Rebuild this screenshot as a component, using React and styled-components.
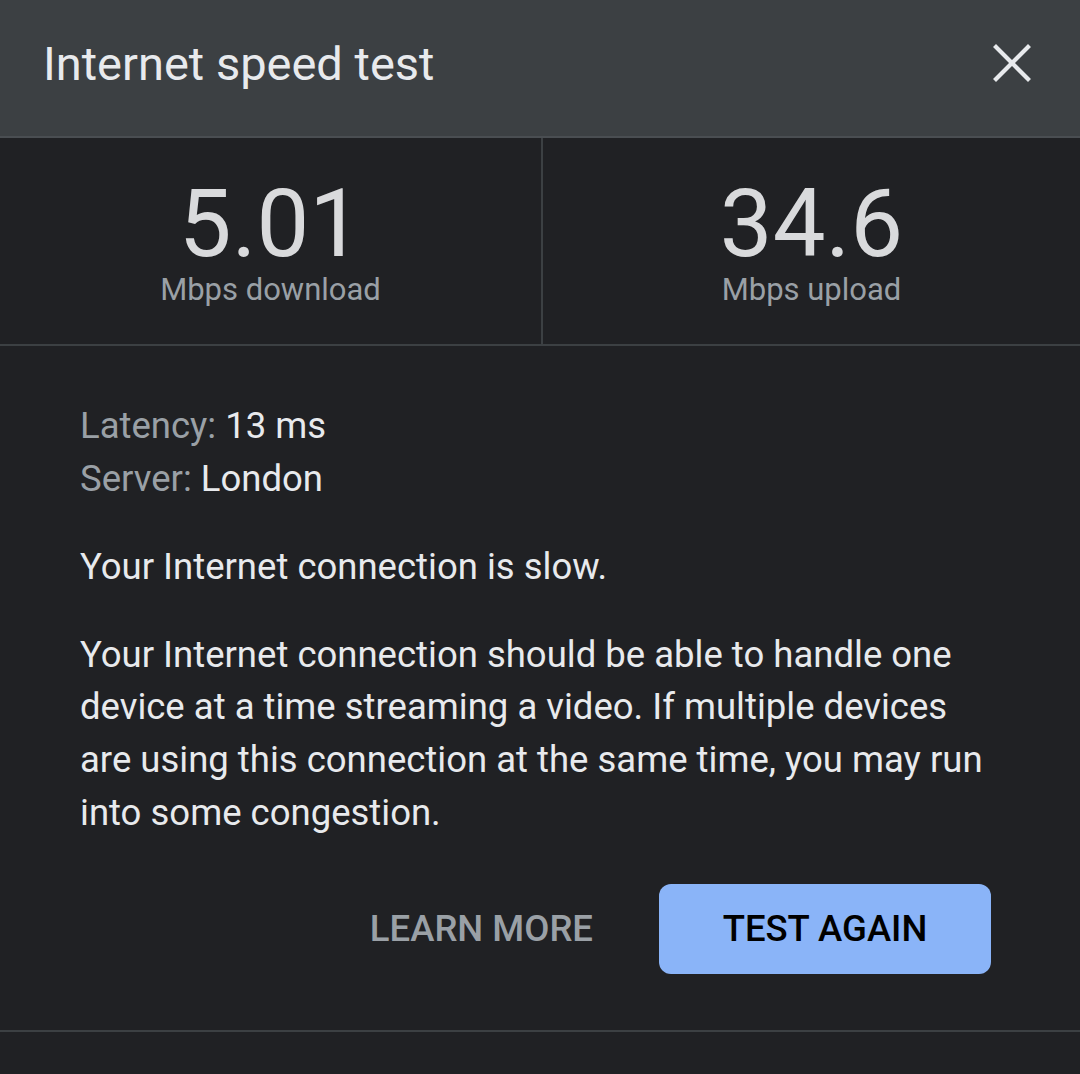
import React from "react";
import styled, { createGlobalStyle } from "styled-components";

const GlobalStyle = createGlobalStyle`
  html, body {
    margin: 0;
    padding: 0;
    background: #202124;
    font-family: Roboto, "Noto Sans", sans-serif;
  }
`;

const Page = styled.div`
  width: 1080px;
  height: 1074px;
  background: #202124;
  display: flex;
  flex-direction: column;
  overflow: hidden;
`;

const Header = styled.header`
  height: 138px;
  background: #3c4043;
  border-bottom: 2px solid #4a4e52;
  display: flex;
  align-items: center;
  justify-content: space-between;
  padding: 0 48px 0 43px;
  box-sizing: border-box;
  flex-shrink: 0;
`;

const Title = styled.h1`
  margin: 0 0 10px;
  font-size: 47px;
  font-weight: 400;
  color: #e8eaed;
`;

const CloseButton = styled.button`
  background: none;
  border: none;
  padding: 0;
  width: 40px;
  height: 40px;
  margin-bottom: 10px;
  display: flex;
  align-items: center;
  justify-content: center;
  cursor: pointer;
`;

const Stats = styled.div`
  display: grid;
  grid-template-columns: 541px 1fr;
  height: 206px;
  border-bottom: 2px solid #3c4043;
  flex-shrink: 0;
`;

const Stat = styled.div`
  display: flex;
  flex-direction: column;
  align-items: center;
  padding-top: 38px;
  border-left: ${(p) => (p.divider ? "2px solid #3c4043" : "none")};
`;

const Value = styled.div`
  font-size: 94px;
  line-height: 96px;
  color: #d9dadc;
`;

const Unit = styled.div`
  font-size: 31px;
  line-height: 36px;
  color: #9aa0a6;
  margin-top: 0;
`;

const Body = styled.div`
  padding: 53px 80px 0 80px;
  flex: 1;
  display: flex;
  flex-direction: column;
`;

const Meta = styled.div`
  font-size: 36.5px;
  line-height: 53px;
  color: #e8eaed;
`;

const Label = styled.span`
  color: #9aa0a6;
`;

const Text = styled.p`
  margin: ${(p) => p.top}px 0 0;
  font-size: 36.5px;
  line-height: 52.7px;
  color: #e8eaed;
`;

const Actions = styled.div`
  display: flex;
  justify-content: flex-end;
  align-items: center;
  gap: 66px;
  margin: 44px -80px 0;
  padding: 0 89px 56px 0;
  border-bottom: 2px solid #3c4043;
`;

const TextButton = styled.button`
  background: none;
  border: none;
  padding: 0;
  font-family: inherit;
  font-size: 36.5px;
  font-weight: 500;
  color: #9aa0a6;
  cursor: pointer;
`;

const FilledButton = styled.button`
  width: 332px;
  height: 90px;
  background: #8ab4f8;
  border: none;
  border-radius: 12px;
  font-family: inherit;
  font-size: 36.5px;
  font-weight: 500;
  color: #000;
  cursor: pointer;
`;

const App = () => {
  return (
    <Page>
      <GlobalStyle />
      <Header>
        <Title>Internet speed test</Title>
        <CloseButton aria-label="Close">
          <svg width="38" height="38" viewBox="0 0 38 38">
            <path
              d="M3 3 L35 35 M35 3 L3 35"
              stroke="#e8eaed"
              strokeWidth="4.2"
              strokeLinecap="square"
            />
          </svg>
        </CloseButton>
      </Header>
      <Stats>
        <Stat>
          <Value>5.01</Value>
          <Unit>Mbps download</Unit>
        </Stat>
        <Stat divider>
          <Value>34.6</Value>
          <Unit>Mbps upload</Unit>
        </Stat>
      </Stats>
      <Body>
        <Meta>
          <div>
            <Label>Latency:</Label> 13 ms
          </div>
          <div>
            <Label>Server:</Label> London
          </div>
        </Meta>
        <Text top={36}>Your Internet connection is slow.</Text>
        <Text top={35}>
          Your Internet connection should be able to handle one device at a
          time streaming a video. If multiple devices are using this
          connection at the same time, you may run into some congestion.
        </Text>
        <Actions>
          <TextButton>LEARN MORE</TextButton>
          <FilledButton>TEST AGAIN</FilledButton>
        </Actions>
      </Body>
    </Page>
  );
};

export default App;
